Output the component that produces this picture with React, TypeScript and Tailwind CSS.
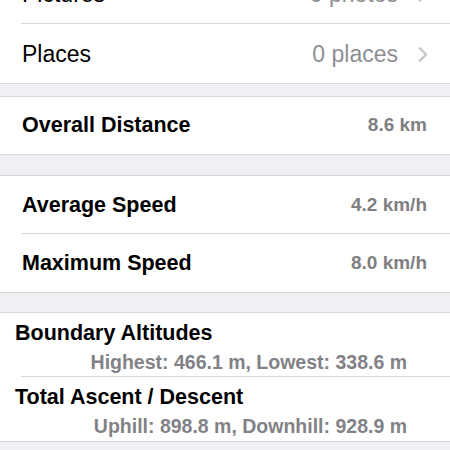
import React from 'react'

const font = { fontFamily: '"Liberation Sans", Arial, sans-serif' }

function Chevron() {
  return (
    <svg width="11" height="17" viewBox="0 0 11 17" className="shrink-0">
      <polyline points="2,1.5 9,8.5 2,15.5" fill="none" stroke="#c7c7cc" strokeWidth="2.4" />
    </svg>
  )
}

function LinkRow({ label, value, inset, h }: { label: string; value: string; inset?: boolean; h: string }) {
  return (
    <div className={`relative flex items-center pl-[22px] pr-[22px] bg-white ${h}`}>
      <span className="text-[23px] text-black flex-1">{label}</span>
      <span className="text-[23px] text-[#8e8e93] mr-[19px]">{value}</span>
      <Chevron />
      <div className={`absolute bottom-0 right-0 h-px bg-[#d8d8dc] ${inset ? 'left-[21px]' : 'left-0'}`} />
    </div>
  )
}

function StatRow({ label, value, inset, h }: { label: string; value: string; inset?: boolean; h: string }) {
  return (
    <div className={`relative flex items-center pl-[22px] pr-[23px] bg-white ${h}`}>
      <span className="text-[21.5px] font-bold text-black flex-1">{label}</span>
      <span className="text-[19px] font-bold text-[#7f7f82]">{value}</span>
      {inset && <div className="absolute bottom-0 left-[21px] right-0 h-px bg-[#d8d8dc]" />}
    </div>
  )
}

function DetailRow({ label, value, inset, h }: { label: string; value: string; inset?: boolean; h: string }) {
  return (
    <div className={`relative flex flex-col pl-[15px] pr-[43px] pt-[7px] bg-white ${h}`}>
      <span className="text-[21.5px] leading-[26px] font-bold text-black">{label}</span>
      <span className="mt-[4px] text-[19.5px] leading-[24px] font-bold text-[#828286] text-right">{value}</span>
      {inset && <div className="absolute bottom-0 left-[21px] right-0 h-px bg-[#d8d8dc]" />}
    </div>
  )
}

export default function App() {
  return (
    <div className="w-[450px] h-[450px] overflow-hidden bg-[#efeff4]" style={font}>
      <div className="-mt-[35px]">
        <LinkRow label="Pictures" value="0 photos" inset h="h-[59px]" />
        <LinkRow label="Places" value="0 places" h="h-[60px]" />

        <div className="h-[12px]" />

        <div className="border-y border-[#d8d8dc]">
          <StatRow label="Overall Distance" value="8.6 km" h="h-[57px]" />
        </div>

        <div className="h-[20px]" />

        <div className="border-y border-[#d8d8dc]">
          <StatRow label="Average Speed" value="4.2 km/h" inset h="h-[58px]" />
          <StatRow label="Maximum Speed" value="8.0 km/h" h="h-[58px]" />
        </div>

        <div className="h-[19px]" />

        <div className="border-y border-[#d8d8dc]">
          <DetailRow label="Boundary Altitudes" value="Highest: 466.1 m, Lowest: 338.6 m" inset h="h-[64px]" />
          <DetailRow label="Total Ascent / Descent" value="Uphill: 898.8 m, Downhill: 928.9 m" h="h-[64px]" />
        </div>
      </div>
    </div>
  )
}
